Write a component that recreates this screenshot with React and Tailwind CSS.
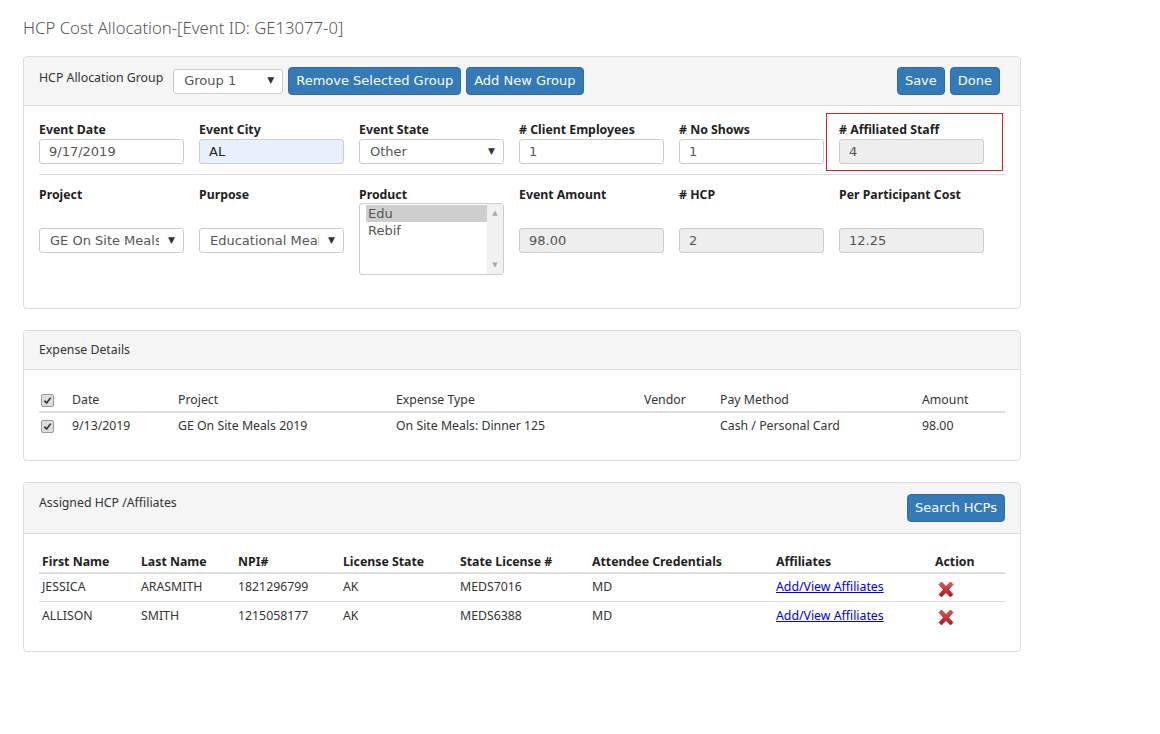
import { useState } from 'react';

const UI = { fontFamily: '"Noto Sans", "Open Sans", sans-serif' };
const CTRL = { fontFamily: '"DejaVu Sans", Verdana, sans-serif' };

function Caret() {
  return <span className="pointer-events-none absolute right-[8px] top-1/2 -translate-y-1/2 text-[9px] text-[#333]">▼</span>;
}

function Field({ label, children }) {
  return (
    <div className="w-[145px]">
      <div className="text-[12.3px] font-bold leading-[16px] text-[#222]">{label}</div>
      {children}
    </div>
  );
}

function TextInput({ value, readOnly, tint }) {
  return (
    <div
      style={CTRL}
      className={`mt-[1px] flex h-[25px] items-center rounded-[3px] border border-[#ccc] px-[9px] text-[13px] ${
        readOnly ? 'bg-[#eee] text-[#555]' : tint ? 'bg-[#e8f0fe] text-[#222]' : 'bg-white text-[#555]'
      }`}
    >
      {value}
    </div>
  );
}

function Select({ value, className = '' }) {
  return (
    <div
      style={CTRL}
      className={`relative flex h-[25px] items-center whitespace-nowrap rounded-[3px] border border-[#ccc] bg-white pl-[10px] pr-[24px] text-[13px] text-[#555] ${className}`}
    >
      <span className="min-w-0 overflow-hidden">{value}</span>
      <Caret />
    </div>
  );
}

function Btn({ children }) {
  return (
    <button
      type="button"
      style={CTRL}
      className="h-[28px] rounded-[4px] border border-[#2e6da4] bg-[#337ab7] px-[7px] text-[13px] text-white"
    >
      {children}
    </button>
  );
}

function Check() {
  return (
    <span className="flex h-[13px] w-[13px] items-center justify-center rounded-[2px] border border-[#999] bg-[#ddd]">
      <svg width="9" height="9" viewBox="0 0 10 10">
        <path d="M1.5 5.2 L4 7.8 L8.6 1.8" fill="none" stroke="#333" strokeWidth="1.8" />
      </svg>
    </span>
  );
}

function RedX() {
  return (
    <svg width="18" height="17" viewBox="0 0 18 17">
      <defs>
        <linearGradient id="rx" x1="0" y1="0" x2="0" y2="1">
          <stop offset="0" stopColor="#e55" />
          <stop offset="1" stopColor="#b01515" />
        </linearGradient>
      </defs>
      <path
        d="M2 3.5 L4.5 1 L9 5.5 L13.5 1 L16 3.5 L11.5 8.5 L16 13.5 L13.5 16 L9 11.5 L4.5 16 L2 13.5 L6.5 8.5 Z"
        fill="url(#rx)"
        stroke="#8a1010"
        strokeWidth="0.6"
      />
    </svg>
  );
}

function Panel({ heading, children, headClass }) {
  return (
    <div className="w-[998px] rounded-[4px] border border-[#ddd] bg-white">
      <div className={`rounded-t-[4px] border-b border-[#ddd] bg-[#f5f5f5] px-[15px] ${headClass}`}>{heading}</div>
      {children}
    </div>
  );
}

const HCPS = [
  ['JESSICA', 'ARASMITH', '1821296799', 'AK', 'MEDS7016', 'MD'],
  ['ALLISON', 'SMITH', '1215058177', 'AK', 'MEDS6388', 'MD'],
];

export default function App() {
  const [group] = useState('Group 1');

  return (
    <div style={UI} className="min-h-[734px] w-[1160px] bg-white pl-[23px] pt-[16px] text-[12.3px] text-[#333]">
      <h1 className="text-[16.7px] font-light leading-[24px] text-[#555]">HCP Cost Allocation-[Event ID: GE13077-0]</h1>

      <div className="mt-[16px]">
        <Panel
          headClass="flex h-[49px] items-center"
          heading={
            <>
              <span className="-mt-[6px] text-[#333]">HCP Allocation Group</span>
              <Select value={group} className="ml-[10px] w-[110px]" />
              <div className="ml-[5px] flex gap-[5px]">
                <Btn>Remove Selected Group</Btn>
                <Btn>Add New Group</Btn>
              </div>
              <div className="ml-auto mr-[5px] flex gap-[5px]">
                <Btn>Save</Btn>
                <Btn>Done</Btn>
              </div>
            </>
          }
        >
          <div className="px-[15px] pb-[33px] pt-[16px]">
            <div className="flex gap-[15px]">
              <Field label="Event Date"><TextInput value="9/17/2019" /></Field>
              <Field label="Event City"><TextInput value="AL" tint /></Field>
              <Field label="Event State"><Select value="Other" className="mt-[1px]" /></Field>
              <Field label="# Client Employees"><TextInput value="1" /></Field>
              <Field label="# No Shows"><TextInput value="1" /></Field>
              <div className="relative">
                <div className="absolute -left-[13px] -top-[9px] h-[58px] w-[177px] border border-[#e02020]" />
                <Field label="# Affiliated Staff"><TextInput value="4" readOnly /></Field>
              </div>
            </div>
            <div className="mt-[10px] border-t border-[#ddd]" />
            <div className="mt-[12px] flex gap-[15px]">
              <Field label="Project"><Select value="GE On Site Meals 2019" className="mt-[25px]" /></Field>
              <Field label="Purpose"><Select value="Educational Meals" className="mt-[25px]" /></Field>
              <Field label="Product">
                <div style={CTRL} className="flex h-[72px] rounded-[3px] border border-[#ccc] bg-white text-[13px] text-[#555]">
                  <div className="flex-1 pl-[6px] pt-[1px] leading-[17px]">
                    <div className="bg-[#cecece] pl-[2px]">Edu</div>
                    <div className="pl-[2px]">Rebif</div>
                  </div>
                  <div className="flex w-[16px] flex-col items-center justify-between bg-[#f1f1f1] py-[4px] text-[7px] text-[#aaa]">
                    <span>▲</span>
                    <span>▼</span>
                  </div>
                </div>
              </Field>
              <Field label="Event Amount"><div className="mt-[25px]"><TextInput value="98.00" readOnly /></div></Field>
              <Field label="# HCP"><div className="mt-[25px]"><TextInput value="2" readOnly /></div></Field>
              <Field label="Per Participant Cost"><div className="mt-[25px]"><TextInput value="12.25" readOnly /></div></Field>
            </div>
          </div>
        </Panel>
      </div>

      <div className="mt-[21px]">
        <Panel headClass="flex h-[39px] items-center" heading="Expense Details">
          <div className="px-[15px] pb-[21px] pt-[20px]">
            <div className="flex h-[23px] items-center border-b-2 border-[#ddd]">
              <div className="w-[33px] pl-[2px]"><Check /></div>
              <div className="w-[106px]">Date</div>
              <div className="w-[218px]">Project</div>
              <div className="w-[248px]">Expense Type</div>
              <div className="w-[76px]">Vendor</div>
              <div className="w-[202px]">Pay Method</div>
              <div>Amount</div>
            </div>
            <div className="flex h-[26px] items-center">
              <div className="w-[33px] pl-[2px]"><Check /></div>
              <div className="w-[106px]">9/13/2019</div>
              <div className="w-[218px]">GE On Site Meals 2019</div>
              <div className="w-[248px]">On Site Meals: Dinner 125</div>
              <div className="w-[76px]" />
              <div className="w-[202px]">Cash / Personal Card</div>
              <div>98.00</div>
            </div>
          </div>
        </Panel>
      </div>

      <div className="mt-[21px]">
        <Panel
          headClass="flex h-[51px] items-start justify-between pr-[15px] pt-[11px]"
          heading={
            <>
              <span className="leading-[18px]">Assigned HCP /Affiliates</span>
              <Btn>Search HCPs</Btn>
            </>
          }
        >
          <div className="px-[15px] pb-[21px] pt-[18px]">
            <div className="flex h-[22px] items-center border-b-2 border-[#ddd] pl-[3px] font-bold text-[#222]">
              <div className="w-[99px]">First Name</div>
              <div className="w-[97px]">Last Name</div>
              <div className="w-[105px]">NPI#</div>
              <div className="w-[117px]">License State</div>
              <div className="w-[132px]">State License #</div>
              <div className="w-[184px]">Attendee Credentials</div>
              <div className="w-[159px]">Affiliates</div>
              <div>Action</div>
            </div>
            {HCPS.map((r, i) => (
              <div key={r[2]} className={`flex h-[28px] items-center pl-[3px] ${i === 0 ? 'border-b border-[#ddd]' : ''}`}>
                <div className="w-[99px]">{r[0]}</div>
                <div className="w-[97px]">{r[1]}</div>
                <div className="w-[105px]">{r[2]}</div>
                <div className="w-[117px]">{r[3]}</div>
                <div className="w-[132px]">{r[4]}</div>
                <div className="w-[184px]">{r[5]}</div>
                <div className="w-[159px]">
                  <a href="#" className="text-[#0000ee] underline">Add/View Affiliates</a>
                </div>
                <div className="pl-[2px] pt-[3px]"><RedX /></div>
              </div>
            ))}
          </div>
        </Panel>
      </div>
    </div>
  );
}
